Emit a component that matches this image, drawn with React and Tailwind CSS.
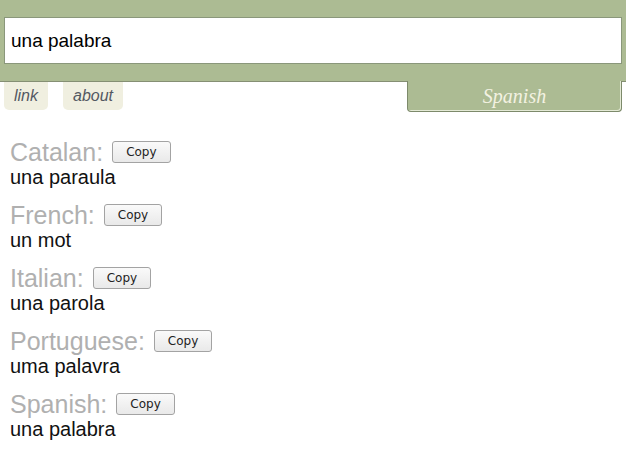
import { useState } from 'react'

const results = [
  { lang: 'Catalan', text: 'una paraula' },
  { lang: 'French', text: 'un mot' },
  { lang: 'Italian', text: 'una parola' },
  { lang: 'Portuguese', text: 'uma palavra' },
  { lang: 'Spanish', text: 'una palabra' },
]

export default function App() {
  const [word, setWord] = useState('una palabra')

  return (
    <div className="w-[626px] h-[465px] bg-white font-['Liberation_Sans',Arial,sans-serif] overflow-hidden">
      {/* Search bar */}
      <div className="h-[82px] bg-[#acbb93] border-b border-[#84907200] border-b-[#858f74] pt-[17px] px-[4px]">
        <input
          value={word}
          onChange={(e) => setWord(e.target.value)}
          className="w-full h-[47px] bg-white border border-[#8a977b] pl-[6px] text-[19px] text-black outline-none"
        />
      </div>

      {/* Tabs */}
      <div className="flex items-start px-[4px]">
        <a className="h-[28px] px-[10px] flex items-center bg-[#f0efe0] rounded-b-[5px] text-[16px] italic text-[#535862]">
          link
        </a>
        <a className="ml-[15px] h-[28px] px-[10px] flex items-center bg-[#f0efe0] rounded-b-[5px] text-[16px] italic text-[#535862]">
          about
        </a>
        <div className="ml-auto -mt-px w-[215px] h-[31px] flex items-center justify-center bg-[#acbb93] border-x border-b border-[#7d8a6b] rounded-b-[4px] shadow-[inset_-1px_-1px_0_#e4ead6] font-['Liberation_Serif',Georgia,serif] italic text-[20px] text-[#f3f2e2]">
          Spanish
        </div>
      </div>

      {/* Results */}
      <div className="pt-[26px] pl-[10px] flex flex-col gap-[12px]">
        {results.map((r) => (
          <div key={r.lang}>
            <div className="flex items-center gap-[9px] h-[28px]">
              <span className="text-[25px] leading-[28px] text-[#b0b0b0]">{r.lang}:</span>
              <button className="h-[22px] px-[13px] rounded-[3px] border border-[#a3a3a3] bg-gradient-to-b from-[#fafafa] to-[#e9e9e9] font-['DejaVu_Sans',sans-serif] text-[12px] text-[#222] leading-none">
                Copy
              </button>
            </div>
            <div className="text-[20px] leading-[23px] text-[#111]">{r.text}</div>
          </div>
        ))}
      </div>
    </div>
  )
}
